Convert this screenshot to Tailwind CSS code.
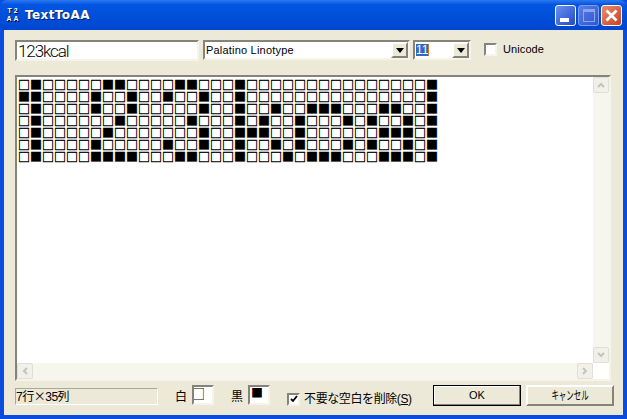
<!DOCTYPE html>
<html lang="ja">
<head>
  <meta charset="UTF-8">
  <title>TextToAA</title>
  <script src="https://cdn.jsdelivr.net/npm/@tailwindcss/browser@4"></script>
</head>
<body class="w-[627px] h-[419px] overflow-hidden bg-[#0a4be0] font-['Liberation_Sans','Noto_Sans_CJK_JP',sans-serif] text-[12px] text-black">

  <!-- title bar -->
  <header class="h-[30px] flex items-center pl-[6px] pr-[5px] rounded-t-[7px] bg-gradient-to-b from-[#2a78f0] via-[#0256e0] via-[15%] to-[#0046d0]">
    <div class="w-[15px] flex flex-col items-center text-[7px] leading-[8px] text-white font-bold [text-shadow:1px_1px_0_#000]">
      <span class="tracking-[2px]">T2</span>
      <span class="tracking-[2px]">AA</span>
    </div>
    <h1 class="ml-[4px] text-white text-[12px] font-bold tracking-[0.4px] font-['DejaVu_Sans',sans-serif] [text-shadow:1px_1px_0_#00207a]">TextToAA</h1>
    <div class="ml-auto mt-[1px] flex gap-[2px]">
      <button class="w-[21px] h-[21px] rounded-[3px] border border-white bg-gradient-to-br from-[#6d8ff0] to-[#2049c8] flex items-end pl-[4px] pb-[3px]">
        <span class="block w-[9px] h-[4px] bg-white"></span>
      </button>
      <button class="w-[21px] h-[21px] rounded-[3px] border border-[#7d9cf0] bg-gradient-to-br from-[#5a7ee8] to-[#2f55cc] flex items-center justify-center">
        <span class="block w-[12px] h-[13px] border border-[#8ba6ef] border-t-[3px]"></span>
      </button>
      <button class="w-[21px] h-[21px] rounded-[3px] border border-white bg-gradient-to-br from-[#e88a70] to-[#c8401c] flex items-center justify-center">
        <svg width="13" height="13" viewBox="0 0 13 13"><path d="M1.5 1.5 L11.5 11.5 M11.5 1.5 L1.5 11.5" stroke="#fff" stroke-width="2.8"/></svg>
      </button>
    </div>
  </header>

  <!-- dialog -->
  <main class="mx-[4px] mb-[4px] h-[385px] bg-[#ece9d8] px-[11px] pt-[10px]">
    <div class="flex items-start h-[21px]">
      <div class="w-[184px] h-[21px] bg-white border-2 border-[#85837a] border-r-[#f6f4e8] border-b-[#f6f4e8] text-[17px] leading-[18px] pl-[1px] tracking-[-1.1px] font-['Roboto',sans-serif] font-light">123kcal</div>
      <div class="ml-[4px] w-[207px] h-[20px] bg-white border-2 border-[#85837a] border-r-[#f6f4e8] border-b-[#f6f4e8] flex items-center pl-[1px] text-[11px] tracking-[0.2px]">
        <span class="flex-1">Palatino Linotype</span>
        <span class="w-[17px] h-[16px] bg-[#ece9d8] border-2 border-[#85837a] border-l-white border-t-white flex items-center justify-center">
          <svg width="8" height="5" viewBox="0 0 8 5"><path d="M0 0H8L4 5Z" fill="#000"/></svg>
        </span>
      </div>
      <div class="ml-[3px] w-[58px] h-[20px] bg-white border-2 border-[#85837a] border-r-[#f6f4e8] border-b-[#f6f4e8] flex items-center pl-[1px] text-[12px]">
        <span class="flex-1"><span class="block w-[13px] h-[12px] leading-[12px] bg-[#316ac5] text-white border-r border-[#c07a20]">11</span></span>
        <span class="w-[17px] h-[16px] bg-[#ece9d8] border-2 border-[#85837a] border-l-white border-t-white flex items-center justify-center">
          <svg width="8" height="5" viewBox="0 0 8 5"><path d="M0 0H8L4 5Z" fill="#000"/></svg>
        </span>
      </div>
      <label class="ml-[13px] mt-[1px] flex items-center">
        <span class="w-[13px] h-[13px] bg-white border-2 border-[#85837a] border-r-[#f6f4e8] border-b-[#f6f4e8]"></span>
        <span class="ml-[6px] text-[11px] tracking-[0.1px]">Unicode</span>
      </label>
    </div>

    <!-- text area -->
    <section class="mt-[14px] w-[596px] h-[306px] bg-white border-2 border-[#85837a] border-r-[#f6f4e8] border-b-[#f6f4e8] flex flex-col">
      <div class="flex-1 flex min-h-0">
        <pre class="flex-1 pl-[1px] pt-[2px] text-[12px] leading-[12px] font-['Noto_Sans_CJK_JP',sans-serif] [-webkit-text-stroke:0.35px_#000]">□■□□□□□■■□□□□■■□□□■□□□□□□□□□□□□□□□■
■■□□□□■□□■□□■□□■□□■□□□□□□□□□□□□□□□■
□■□□□□■□□■□□□□□■□□■□□■□□■■■□□□■■□□■
□■□□□□□□■□□□□□■□□□■□■□□■□□□■□■□□■□■
□■□□□□□■□□□□□□□■□□■■■□□■□□□□□□■■■□■
□■□□□□■□□□□□■□□■□□■□□■□■□□□■□■□□■□■
□■□□□□■■■■□□□■■□□□■□□□■□■■■□□□■■■□■</pre>
        <div class="w-[16px] flex flex-col justify-between bg-[#f6f5ee]">
          <span class="h-[16px] rounded-[2px] bg-[#f1f1ea] border border-[#dfe0d4] flex items-center justify-center">
            <svg width="8" height="6" viewBox="0 0 8 6"><path d="M1 5L4 2L7 5" fill="none" stroke="#c4c5b8" stroke-width="2"/></svg>
          </span>
          <span class="h-[16px] rounded-[2px] bg-[#f1f1ea] border border-[#dfe0d4] flex items-center justify-center">
            <svg width="8" height="6" viewBox="0 0 8 6"><path d="M1 1L4 4L7 1" fill="none" stroke="#c4c5b8" stroke-width="2"/></svg>
          </span>
        </div>
      </div>
      <div class="h-[16px] mr-[16px] flex justify-between bg-[#f6f5ee]">
        <span class="w-[16px] rounded-[2px] bg-[#f1f1ea] border border-[#dfe0d4] flex items-center justify-center">
          <svg width="6" height="8" viewBox="0 0 6 8"><path d="M5 1L2 4L5 7" fill="none" stroke="#c4c5b8" stroke-width="2"/></svg>
        </span>
        <span class="w-[16px] rounded-[2px] bg-[#f1f1ea] border border-[#dfe0d4] flex items-center justify-center">
          <svg width="6" height="8" viewBox="0 0 6 8"><path d="M1 1L4 4L1 7" fill="none" stroke="#c4c5b8" stroke-width="2"/></svg>
        </span>
      </div>
    </section>

    <!-- bottom row -->
    <footer class="mt-[4px] flex items-start h-[21px]">
      <div class="mt-[3px] w-[143px] h-[17px] border border-[#aca899] border-r-white border-b-white text-[12px] leading-[14px] tracking-[-0.5px]">7行<span class="font-['Noto_Sans_CJK_JP',sans-serif]">×</span>35列</div>
      <span class="ml-[17px] mt-[5px] text-[12px] leading-[14px]">白</span>
      <div class="ml-[5px] w-[22px] h-[20px] overflow-hidden bg-white border-2 border-[#85837a] border-r-[#f6f4e8] border-b-[#f6f4e8] text-[14px] leading-[12px] font-['Noto_Sans_CJK_JP',sans-serif]"><span class="block -ml-[3px]">□</span></div>
      <span class="ml-[17px] mt-[5px] text-[12px] leading-[14px]">黒</span>
      <div class="ml-[5px] w-[22px] h-[20px] bg-white border-2 border-[#85837a] border-r-[#f6f4e8] border-b-[#f6f4e8] pl-[1px] text-[12px] leading-[12px] font-['Noto_Sans_CJK_JP',sans-serif]">■</div>
      <label class="ml-[17px] mt-[5px] flex items-center">
        <span class="w-[13px] h-[13px] bg-white border-2 border-[#85837a] border-r-[#f6f4e8] border-b-[#f6f4e8] flex items-center justify-center">
          <svg width="8" height="8" viewBox="0 0 8 8"><path d="M1 4L3 6L7 1" fill="none" stroke="#000" stroke-width="1.8"/></svg>
        </span>
        <span class="ml-[4px] text-[12px] tracking-[-0.4px]">不要な空白を削除(<span class="underline">S</span>)</span>
      </label>
      <button class="ml-auto w-[88px] h-[21px] bg-[#ece9d8] border border-black shadow-[inset_-1px_-1px_0_#85837a,inset_1px_1px_0_#fff] text-[11px]">OK</button>
      <button class="ml-[5px] -mr-[2px] w-[88px] h-[21px] bg-[#ece9d8] border-2 border-[#85837a] border-l-white border-t-white text-[12px]"><span class="inline-block scale-x-[0.62]">キャンセル</span></button>
    </footer>
  </main>
</body>
</html>
